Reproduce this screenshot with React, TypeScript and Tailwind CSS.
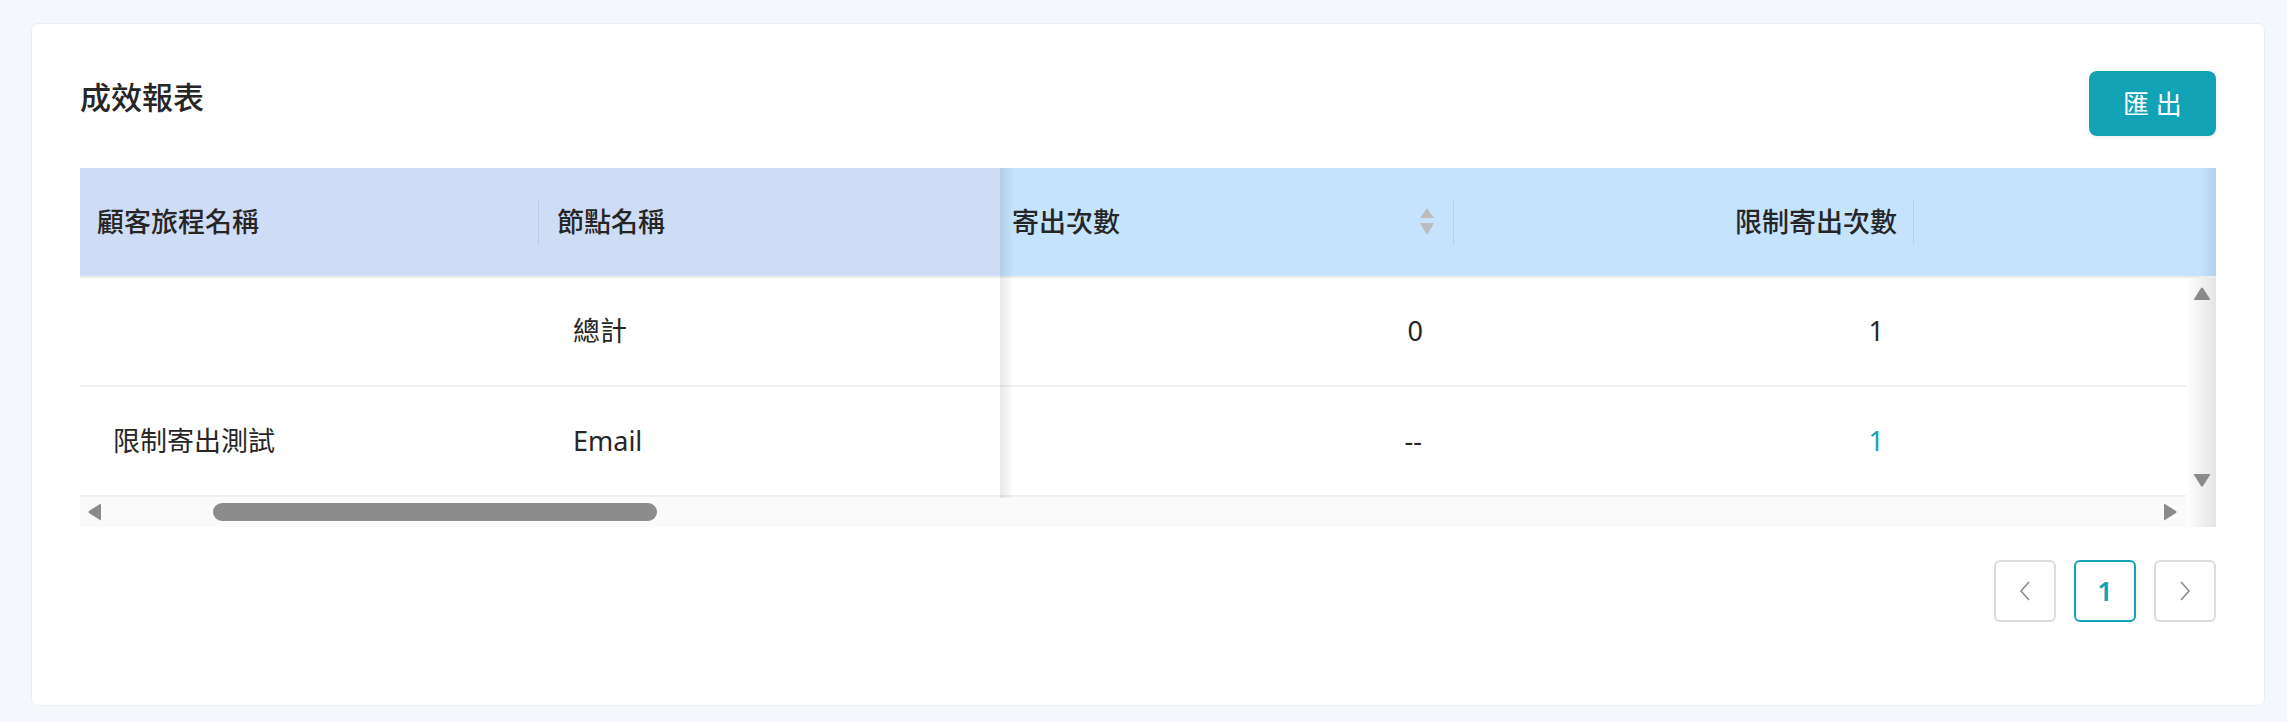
import React from "react";

function SortIcon() {
  return (
    <svg width="16" height="28" viewBox="0 0 16 28" className="block">
      <path d="M8 0 L15 10 L1 10 Z" fill="#bcbcbc" />
      <path d="M1 15 L15 15 L8 27 Z" fill="#bcbcbc" />
    </svg>
  );
}

function Tri({ dir }: { dir: "up" | "down" | "left" | "right" }) {
  const d =
    dir === "up"
      ? "M9 1 Q10 0 11 1 L18 12 Q18.5 13 17 13 L3 13 Q1.5 13 2 12 Z"
      : dir === "down"
      ? "M3 1 L17 1 Q18.5 1 18 2 L11 13 Q10 14 9 13 L2 2 Q1.5 1 3 1 Z"
      : dir === "left"
      ? "M12 1 Q13 0.5 13 2 L13 16 Q13 17.5 12 17 L1 10 Q0 9 1 8 Z"
      : "M2 1 Q1 0.5 1 2 L1 16 Q1 17.5 2 17 L13 10 Q14 9 13 8 Z";
  const vb = dir === "up" || dir === "down" ? "0 0 20 14" : "0 0 14 18";
  const w = dir === "up" || dir === "down" ? 20 : 14;
  const h = dir === "up" || dir === "down" ? 14 : 18;
  return (
    <svg width={w} height={h} viewBox={vb} className="block">
      <path d={d} fill="#8a8a8a" />
    </svg>
  );
}

export default function App() {
  return (
    <div className="w-full h-[722px] bg-[#f4f7fc] pt-[23px] pl-[31px] pr-[22px] font-['Noto_Sans','Noto_Sans_CJK_TC',sans-serif] text-[#262626]">
      <div className="h-[683px] bg-white border border-[#ebedf0] rounded-[7px] px-[48px] pt-[47px]">
        {/* top row */}
        <div className="flex justify-between items-start">
          <div className="text-[31px] leading-[40px] mt-[6px] font-medium text-[#262626]">成效報表</div>
          <button className="w-[127px] h-[65px] rounded-[8px] bg-[#11a2b6] text-white text-[26px] leading-none shadow-[0_2px_4px_rgba(0,0,0,0.06)]">
            匯 出
          </button>
        </div>

        {/* table */}
        <div className="relative mt-[32px]">
          {/* header */}
          <div className="grid grid-cols-[459px_461px_454px_460px_1fr] h-[108px] text-[27px] font-medium text-[#262626]">
            <div className="bg-[#cfdcf5] flex items-center justify-between pl-[17px]">
              <span>顧客旅程名稱</span>
              <span className="w-px h-[46px] bg-[#bccbe6]" />
            </div>
            <div className="bg-[#cfdcf5] flex items-center pl-[18px]">
              <span>節點名稱</span>
            </div>
            <div className="bg-[#c5e3fd] flex items-center pl-[12px]">
              <span>寄出次數</span>
              <span className="ml-auto mr-[18px]">
                <SortIcon />
              </span>
              <span className="w-px h-[46px] bg-[#b4d3ef]" />
            </div>
            <div className="bg-[#c5e3fd] flex items-center justify-end">
              <span>限制寄出次數</span>
              <span className="w-[16px]" />
              <span className="w-px h-[46px] bg-[#b4d3ef]" />
            </div>
            <div className="bg-[#c5e3fd]" />
          </div>
          <div className="h-[2px] bg-[#ececec]" />

          {/* body */}
          <div className="flex">
            <div className="flex-1">
              <div className="grid grid-cols-[459px_461px_454px_460px_1fr] h-[109px] border-b-2 border-[#f0f0f0] text-[27px] items-center">
                <div className="pl-[33px]"></div>
                <div className="pl-[34px]">總計</div>
                <div className="text-right pr-[31px]">0</div>
                <div className="text-right pr-[30px]">1</div>
                <div />
              </div>
              <div className="grid grid-cols-[459px_461px_454px_460px_1fr] h-[110px] border-b-2 border-[#f0f0f0] text-[27px] items-center">
                <div className="pl-[33px]">限制寄出測試</div>
                <div className="pl-[34px]">Email</div>
                <div className="text-right pr-[32px]">--</div>
                <div className="text-right pr-[30px] text-[#11a2b6]">1</div>
                <div />
              </div>
              {/* horizontal scrollbar */}
              <div className="h-[30px] bg-[#fafafa] flex items-center pl-[8px] pr-[9px]">
                <Tri dir="left" />
                <div className="ml-[111px] w-[444px] h-[18px] rounded-full bg-[#8c8c8c]" />
                <div className="ml-auto">
                  <Tri dir="right" />
                </div>
              </div>
            </div>
            {/* vertical scrollbar */}
            <div className="w-[30px] bg-linear-to-r from-[#ffffff] to-[#e4e4e4] flex flex-col items-center pt-[9px] pb-[40px] pl-[2px]">
              <Tri dir="up" />
              <div className="flex-1" />
              <Tri dir="down" />
            </div>
          </div>

          {/* fixed column shadow */}
          <div className="absolute left-[920px] top-0 w-[14px] h-[330px] bg-linear-to-r from-[rgba(0,0,0,0.09)] to-transparent pointer-events-none" />
          {/* right edge shadow on header */}
          <div className="absolute right-0 top-0 w-[16px] h-[108px] bg-linear-to-r from-transparent to-[rgba(0,40,90,0.09)] pointer-events-none" />
        </div>

        {/* pagination */}
        <div className="flex justify-end gap-[18px] mt-[33px]">
          <button className="w-[62px] h-[62px] rounded-[6px] border-2 border-[#dcdcdc] flex items-center justify-center">
            <svg width="16" height="24" viewBox="0 0 16 24">
              <path d="M12 3 L4 12 L12 21" stroke="#8c8c8c" strokeWidth="1.6" fill="none" />
            </svg>
          </button>
          <button className="w-[62px] h-[62px] rounded-[6px] border-2 border-[#11a2b6] flex items-center justify-center text-[27px] font-semibold text-[#11a2b6]">
            1
          </button>
          <button className="w-[62px] h-[62px] rounded-[6px] border-2 border-[#dcdcdc] flex items-center justify-center">
            <svg width="16" height="24" viewBox="0 0 16 24">
              <path d="M4 3 L12 12 L4 21" stroke="#8c8c8c" strokeWidth="1.6" fill="none" />
            </svg>
          </button>
        </div>
      </div>
    </div>
  );
}
